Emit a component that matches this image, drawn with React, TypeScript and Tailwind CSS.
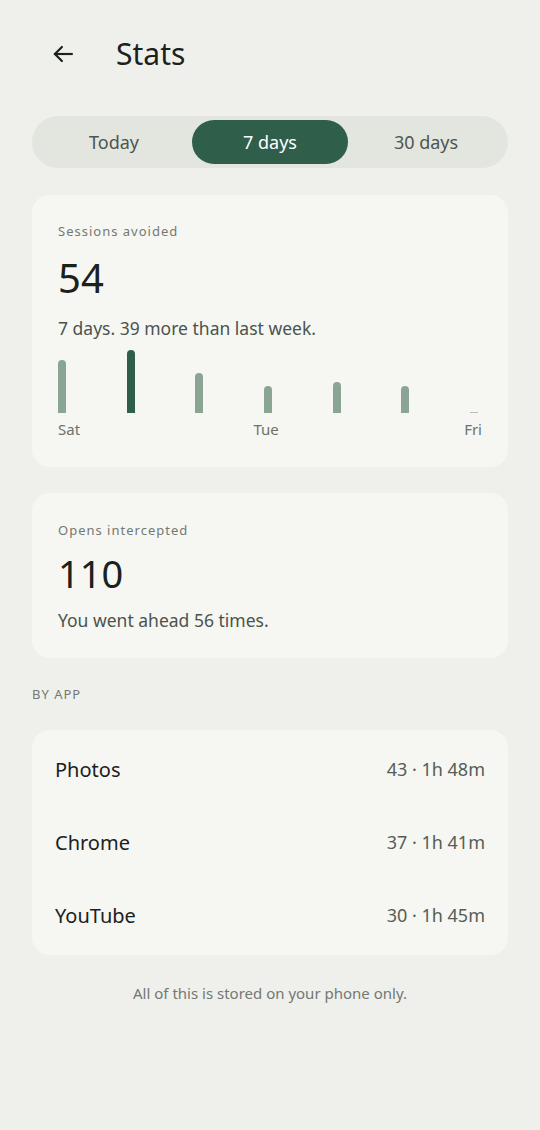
import React from 'react'

const bars = [
  { day: 'Sat', h: 53, active: false },
  { day: 'Sun', h: 63, active: true },
  { day: 'Mon', h: 40, active: false },
  { day: 'Tue', h: 27, active: false },
  { day: 'Wed', h: 31, active: false },
  { day: 'Thu', h: 27, active: false },
  { day: 'Fri', h: 1, active: false },
]

const apps = [
  { name: 'Photos', value: '43 · 1h 48m' },
  { name: 'Chrome', value: '37 · 1h 41m' },
  { name: 'YouTube', value: '30 · 1h 45m' },
]

const App = () => {
  return (
    <div
      className="min-h-[1130px] w-[540px] bg-[#eff0ec] text-[#1b211d]"
      style={{ fontFamily: '"Noto Sans", "Open Sans", sans-serif' }}
    >
      {/* Top bar */}
      <header className="flex h-[108px] items-center px-[50px]">
        <svg width="26" height="26" viewBox="0 0 24 24" fill="none" stroke="#1b211d" strokeWidth="2" strokeLinecap="square">
          <path d="M20 12H5" />
          <path d="M11 5.5 4.5 12 11 18.5" strokeLinecap="round" strokeLinejoin="miter" />
        </svg>
        <h1 className="ml-[40px] text-[30px] leading-none">Stats</h1>
      </header>

      <main className="px-[32px]">
        {/* Range tabs */}
        <div className="mt-[8px] grid h-[52px] grid-cols-3 rounded-full bg-[#e3e6df] p-[4px] text-[18px]">
          <div className="flex items-center justify-center text-[#4d554f]">Today</div>
          <div className="flex items-center justify-center rounded-full bg-[#2f5e4b] text-white">7 days</div>
          <div className="flex items-center justify-center text-[#4d554f]">30 days</div>
        </div>

        {/* Sessions avoided */}
        <section className="mt-[27px] rounded-[18px] bg-[#f6f7f3] px-[26px] pt-[27px] pb-[28px]">
          <p className="text-[13px] leading-[18px] tracking-[1px] text-[#737873]">Sessions avoided</p>
          <p className="mt-[16px] text-[40px] leading-[44px]">54</p>
          <p className="mt-[16px] text-[17.5px] leading-[24px] text-[#4b534d]">7 days. 39 more than last week.</p>
          <div className="mt-[7px] flex h-[66px] items-end justify-between pr-[4px]">
            {bars.map((b) => (
              <div
                key={b.day}
                className={b.active ? 'w-[8px] rounded-t-full bg-[#2f5e4b]' : b.h < 3 ? 'w-[8px] bg-[#b7c2ba]' : 'w-[8px] rounded-t-full bg-[#8ba595]'}
                style={{ height: b.h }}
              />
            ))}
          </div>
          <div className="mt-[6px] flex justify-between text-[15px] leading-[20px] text-[#6b726c]">
            <span>Sat</span>
            <span className="pr-[12px]">Tue</span>
            <span>Fri</span>
          </div>
        </section>

        {/* Opens intercepted */}
        <section className="mt-[26px] rounded-[18px] bg-[#f6f7f3] px-[26px] pt-[28px] pb-[26px]">
          <p className="text-[13px] leading-[18px] tracking-[1px] text-[#737873]">Opens intercepted</p>
          <p className="mt-[12px] text-[38px] leading-[44px]">110</p>
          <p className="mt-[13px] text-[17.5px] leading-[24px] text-[#4b534d]">You went ahead 56 times.</p>
        </section>

        <p className="mt-[27px] text-[13px] leading-[18px] tracking-[1px] text-[#737873]">BY APP</p>

        {/* By app */}
        <section className="mt-[27px] rounded-[18px] bg-[#f6f7f3] px-[23px] py-[3px]">
          {apps.map((a) => (
            <div key={a.name} className="flex h-[73px] items-center justify-between">
              <span className="text-[20px]">{a.name}</span>
              <span className="text-[18px] text-[#555d57]">{a.value}</span>
            </div>
          ))}
        </section>

        <p className="mt-[27px] text-center text-[15px] text-[#737873]">All of this is stored on your phone only.</p>
      </main>
    </div>
  )
}

export default App
